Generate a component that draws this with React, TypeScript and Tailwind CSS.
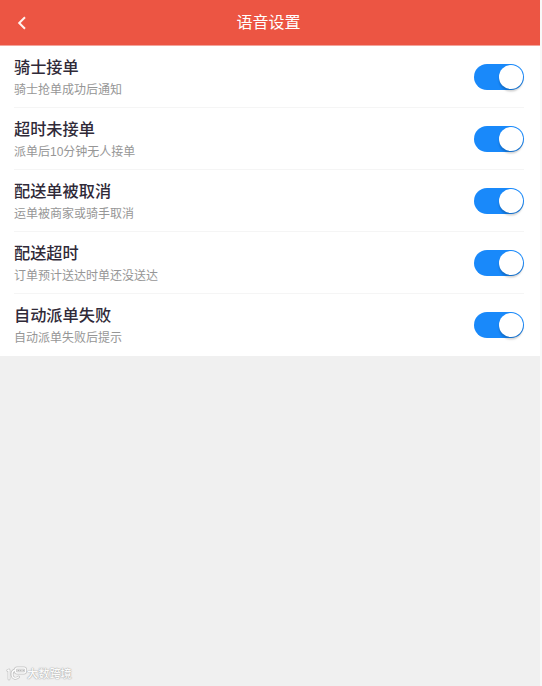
import { useState } from 'react'

interface VoiceSetting {
  title: string
  description: string
}

const settings: VoiceSetting[] = [
  { title: '骑士接单', description: '骑士抢单成功后通知' },
  { title: '超时未接单', description: '派单后10分钟无人接单' },
  { title: '配送单被取消', description: '运单被商家或骑手取消' },
  { title: '配送超时', description: '订单预计送达时单还没送达' },
  { title: '自动派单失败', description: '自动派单失败后提示' },
]

function Toggle({ label }: { label: string }) {
  const [on, setOn] = useState(true)

  return (
    <button
      type="button"
      role="switch"
      aria-checked={on}
      aria-label={label}
      onClick={() => setOn(!on)}
      className={`flex h-[26px] w-[50px] shrink-0 items-center rounded-full p-px ${
        on ? 'justify-end bg-[#1989fa]' : 'justify-start bg-gray-300'
      }`}
    >
      <span className="size-6 rounded-full bg-white shadow-[0_3px_1px_rgba(0,0,0,0.05),0_2px_2px_rgba(0,0,0,0.1),0_3px_3px_rgba(0,0,0,0.05)]" />
    </button>
  )
}

function SettingRow({ title, description }: VoiceSetting) {
  return (
    <div className="flex h-[62px] items-center justify-between border-b border-[#f5f5f5] last:border-transparent">
      <div className="pt-[3px]">
        <h2 className="text-[16.2px] leading-[22px] font-medium text-[#302a38]">{title}</h2>
        <p className="mt-0.5 text-xs leading-5 text-[#969696]">{description}</p>
      </div>
      <Toggle label={title} />
    </div>
  )
}

function Watermark() {
  return (
    <div className="flex items-center pb-1 pl-[6px]">
      <svg width="21" height="16" viewBox="0 0 21 16" fill="none" strokeLinecap="round" strokeLinejoin="round">
        <g stroke="#c2c2c2" strokeWidth="2.8">
          <path d="M1.8 4.5 3 4v9M9.5 4C6.5 4.5 5.8 7 6.2 9.5s3.3 4 6.3 1.5" />
          <rect x="9.5" y="2" width="10" height="5" rx="1.5" />
        </g>
        <g stroke="#fcfcfc" strokeWidth="1.4">
          <path d="M1.8 4.5 3 4v9M9.5 4C6.5 4.5 5.8 7 6.2 9.5s3.3 4 6.3 1.5" />
          <rect x="9.5" y="2" width="10" height="5" rx="1.5" />
        </g>
        <path d="M12 4.5h1M14.5 4.5h.5M17 4.5h.5" stroke="#b5b5b5" strokeWidth="1" />
      </svg>
      <span className="text-[11.2px] leading-4 font-medium text-[#fbfbfb] [text-shadow:0_0_1px_#aaa,0_0_1px_#aaa,0_0_2px_#ccc]">
        大数跨境
      </span>
    </div>
  )
}

export default function App() {
  return (
    <div className="h-[686px] w-[542px] bg-[#f8f8f8] font-['Liberation_Sans','Noto_Sans_CJK_SC',sans-serif]">
      <div className="flex h-full w-[540px] flex-col bg-[#f0f0f0]">
        <header className="grid h-[46px] grid-cols-[44px_1fr_44px] items-center border-b border-[#f3a49b] bg-[#ec5543] text-white">
          <button type="button" aria-label="返回" className="flex justify-center">
            <svg width="10" height="14" viewBox="0 0 10 14" fill="none" stroke="#fff3ef" strokeWidth="2">
              <path d="M8 1.2 2.2 7 8 12.8" />
            </svg>
          </button>
          <h1 className="pr-[3px] text-center text-base leading-6 font-normal">语音设置</h1>
        </header>

        <main className="bg-white pr-4 pl-[14px]">
          {settings.map((item) => (
            <SettingRow key={item.title} {...item} />
          ))}
        </main>

        <footer className="mt-auto">
          <Watermark />
        </footer>
      </div>
    </div>
  )
}
